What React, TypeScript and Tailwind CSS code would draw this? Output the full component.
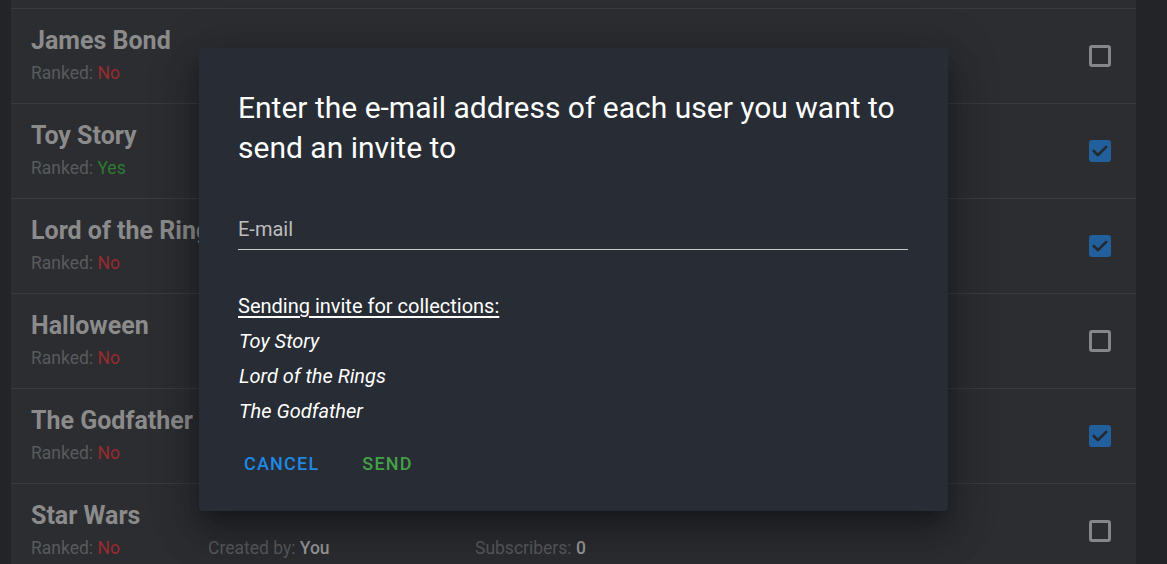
import React from 'react';

type Collection = {
  name: string;
  ranked: boolean;
  selected: boolean;
};

const collections: Collection[] = [
  { name: 'James Bond', ranked: false, selected: false },
  { name: 'Toy Story', ranked: true, selected: true },
  { name: 'Lord of the Rings', ranked: false, selected: true },
  { name: 'Halloween', ranked: false, selected: false },
  { name: 'The Godfather', ranked: false, selected: true },
  { name: 'Star Wars', ranked: false, selected: false },
];

function Checkbox({ checked }: { checked: boolean }) {
  if (checked) {
    return (
      <div className="w-[22px] h-[22px] rounded-[3px] bg-[#21609c] flex items-center justify-center">
        <svg width="20" height="20" viewBox="0 0 24 24" fill="none">
          <path d="M4.5 12l5 5L19.5 7" stroke="#25282d" strokeWidth="3.2" strokeLinecap="round" strokeLinejoin="round" />
        </svg>
      </div>
    );
  }
  return <div className="w-[22px] h-[22px] rounded-[3px] border-[3px] border-[#858687]" />;
}

function CollectionRow({ item }: { item: Collection }) {
  return (
    <div className="h-[95px] flex items-center justify-between border-b border-[#393b3f] pl-5 pr-[25px]">
      <div className="self-start pt-[17px]">
        <div className="text-[25px] leading-[30px] font-bold text-[#8b8b8b]">{item.name}</div>
        <div className="mt-[5px] grid grid-cols-[177px_267px_auto] text-[17.5px] leading-[24px] text-[#595a5c]">
          <div>
            Ranked:{' '}
            {item.ranked ? (
              <span className="text-[#2e7a33]">Yes</span>
            ) : (
              <span className="text-[#9a2a2e]">No</span>
            )}
          </div>
          <div>
            Created by: <span className="font-medium text-[#9a9a9b]">You</span>
          </div>
          <div>
            Subscribers: <span className="font-medium text-[#9a9a9b]">0</span>
          </div>
        </div>
      </div>
      <Checkbox checked={item.selected} />
    </div>
  );
}

function InviteDialog() {
  const picked = collections.filter((c) => c.selected);
  return (
    <div className="absolute left-[199px] top-[48px] w-[749px] h-[463px] bg-[#282c34] rounded-[4px] shadow-[0_11px_15px_-7px_rgba(0,0,0,0.3),0_24px_38px_3px_rgba(0,0,0,0.2),0_9px_46px_8px_rgba(0,0,0,0.18)] pl-[39px] pr-10 pt-[40px]">
      <h2 className="text-[30px] leading-[40px] text-white font-normal">
        Enter the e-mail address of each user you want to send an invite to
      </h2>
      <div className="mt-[40px] pt-[6px] border-b border-[#c8c8c8] h-[42px]">
        <div className="text-[20px] leading-[30px] text-[#bdbdbd]">E-mail</div>
      </div>
      <div className="mt-[41px] text-[20px] leading-[30px] text-white underline underline-offset-[3px]">
        Sending invite for collections:
      </div>
      <div className="mt-[3px] flex flex-col pl-[1px]">
        {picked.map((c) => (
          <div key={c.name} className="text-[20px] leading-[35px] italic text-white">
            {c.name}
          </div>
        ))}
      </div>
      <div className="mt-[13px] flex items-center gap-[27px] -ml-[2px]">
        <button className="px-2 h-[42px] text-[18px] font-medium tracking-[1.2px] text-[#1e88e5]">CANCEL</button>
        <button className="px-2 h-[42px] text-[18px] font-medium tracking-[1.2px] text-[#43a047]">SEND</button>
      </div>
    </div>
  );
}

export default function App() {
  return (
    <div className="relative w-[1167px] h-[564px] overflow-hidden bg-[#232427]" style={{ fontFamily: 'Roboto, "Noto Sans", sans-serif' }}>
      <div className="ml-[11px] w-[1125px] h-full bg-[#2b2d31]">
        <div className="h-[9px] border-b border-[#393b3f]" />
        {collections.map((c) => (
          <CollectionRow key={c.name} item={c} />
        ))}
      </div>
      <InviteDialog />
    </div>
  );
}
